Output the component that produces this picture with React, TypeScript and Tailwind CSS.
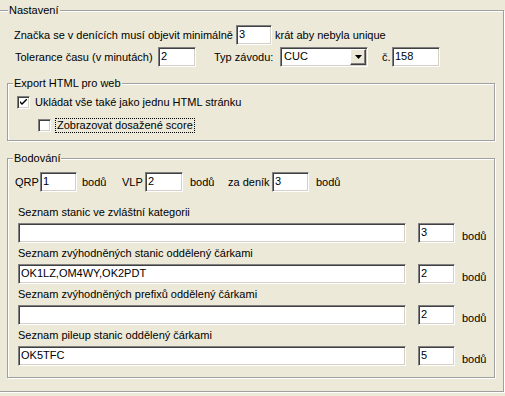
import React from 'react';

const sunken =
  'bg-white border border-t-[#808080] border-l-[#808080] border-r-white border-b-white shadow-[inset_1px_1px_0_#404040,inset_-1px_-1px_0_#d4d0c8]';
const etched = 'border border-[#a0a0a0] shadow-[1px_1px_0_#fff,inset_1px_1px_0_#fff] p-0';
const legend = 'bg-[#ece9d8] leading-[13px] px-[1px]';

function Field({ value = '', w }: { value?: string; w: string }) {
  return (
    <div className={`${sunken} ${w} h-[20px] shrink-0 pl-[2px] pt-[2px] leading-[13px] whitespace-nowrap overflow-hidden`}>
      {value}
    </div>
  );
}

function Check({ checked }: { checked?: boolean }) {
  return (
    <div className={`${sunken} w-[13px] h-[13px] shrink-0 flex items-center justify-center`}>
      {checked && (
        <svg width="7" height="7" viewBox="0 0 7 7">
          <path d="M0 2 L0 4 L2 6 L7 1 L7 -1 L2 4 Z" fill="#000" />
        </svg>
      )}
    </div>
  );
}

const LISTS = [
  { label: 'Seznam stanic ve zvláštní kategorii', value: '', pts: '3' },
  { label: 'Seznam zvýhodněných stanic oddělený čárkami', value: 'OK1LZ,OM4WY,OK2PDT', pts: '2' },
  { label: 'Seznam zvýhodněných prefixů oddělený čárkami', value: '', pts: '2' },
  { label: 'Seznam pileup stanic oddělený čárkami', value: 'OK5TFC', pts: '5' },
];

export default function App() {
  return (
    <div className="w-[505px] h-[396px] overflow-hidden bg-[#ece9d8] text-black text-[11px] font-['Liberation_Sans',Arial,sans-serif] pt-[4px]">
      <fieldset className={`${etched} ml-[-2px] w-[506px]`}>
        <legend className={`${legend} ml-[9px]`}>Nastavení</legend>
        <div className="pl-[8px] pt-[8px] h-[374px] flex flex-col">
          {/* top rows */}
          <div className="flex items-center h-[20px] pl-[7px]">
            <span className="w-[222px] whitespace-nowrap">Značka se v denících musí objevit minimálně</span>
            <Field value="3" w="w-[36px]" />
            <span className="ml-[3px] whitespace-nowrap">krát aby nebyla unique</span>
          </div>
          <div className="flex items-center h-[20px] mt-[2px] pl-[8px]">
            <span className="w-[143px] whitespace-nowrap">Tolerance času (v minutách)</span>
            <Field value="2" w="w-[38px]" />
            <span className="ml-[18px] w-[66px] whitespace-nowrap">Typ závodu:</span>
            <div className={`${sunken} w-[88px] h-[20px] flex items-stretch p-[1px]`}>
              <span className="flex-1 pl-[2px] pt-[1px] leading-[13px]">CUC</span>
              <div className="w-[16px] bg-[#ece9d8] border border-t-white border-l-white border-r-[#404040] border-b-[#404040] shadow-[inset_-1px_-1px_0_#808080] flex items-center justify-center">
                <svg width="7" height="4" viewBox="0 0 7 4">
                  <path d="M0 0 H7 L3.5 4 Z" fill="#000" />
                </svg>
              </div>
            </div>
            <span className="ml-[14px] w-[10px]">č.</span>
            <Field value="158" w="w-[48px]" />
          </div>

          {/* export */}
          <fieldset className={`${etched} mt-[10px] w-[488px]`}>
            <legend className={`${legend} ml-[5px]`}>Export HTML pro web</legend>
            <div className="h-[50px] pt-[4px] flex flex-col">
              <div className="flex items-center h-[17px] pl-[9px]">
                <Check checked />
                <span className="ml-[5px] leading-[13px] whitespace-nowrap">Ukládat vše také jako jednu HTML stránku</span>
              </div>
              <div className="flex items-center h-[17px] mt-[6px] pl-[30px]">
                <Check />
                <span className="ml-[4px] px-[1px] leading-[13px] border border-dotted border-black whitespace-nowrap">
                  Zobrazovat dosažené score
                </span>
              </div>
            </div>
          </fieldset>

          {/* scoring */}
          <fieldset className={`${etched} mt-[11px] w-[488px]`}>
            <legend className={`${legend} ml-[5px]`}>Bodování</legend>
            <div className="h-[212px] pt-[7px] flex flex-col">
              <div className="flex items-center h-[20px] pl-[7px]">
                <span className="w-[25px]">QRP</span>
                <Field value="1" w="w-[37px]" />
                <span className="ml-[5px] w-[40px]">bodů</span>
                <span className="w-[23px]">VLP</span>
                <Field value="2" w="w-[38px]" />
                <span className="ml-[7px] w-[38px]">bodů</span>
                <span className="w-[44px] whitespace-nowrap">za deník</span>
                <Field value="3" w="w-[37px]" />
                <span className="ml-[7px]">bodů</span>
              </div>
              <div className="mt-[14px] pl-[10px] flex flex-col gap-[4px]">
                {LISTS.map((l) => (
                  <div key={l.label} className="flex flex-col">
                    <div className="leading-[13px] h-[13px] whitespace-nowrap">{l.label}</div>
                    <div className="flex mt-[4px] h-[20px]">
                      <Field value={l.value} w="w-[388px]" />
                      <div className="ml-[12px]">
                        <Field value={l.pts} w="w-[37px]" />
                      </div>
                      <span className="ml-[7px] self-end leading-[13px]">bodů</span>
                    </div>
                  </div>
                ))}
              </div>
            </div>
          </fieldset>
        </div>
      </fieldset>
    </div>
  );
}
